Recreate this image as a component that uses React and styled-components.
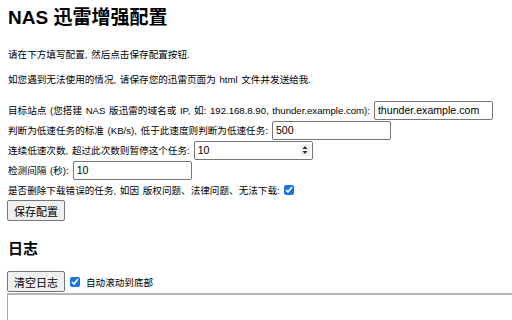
import React from "react";
import styled, { createGlobalStyle, css } from "styled-components";

const Global = createGlobalStyle`
  html, body { margin: 0; padding: 0; background: #fff; overflow: hidden; }
  body {
    font-family: "Liberation Sans", "Noto Sans CJK SC", sans-serif;
    color: #000;
  }
`;

const bodyText = css`
  font-size: 9.6px;
  word-spacing: 1px;
`;

const Page = styled.div`
  padding: 8px 0 0 8px;
`;

const Title = styled.h1`
  margin: 0;
  font-size: 19px;
  line-height: 20px;
  font-weight: 700;
`;

const Para = styled.p`
  ${bodyText};
  margin: ${(p) => p.$top}px 0 0;
  line-height: 12px;
`;

const Form = styled.div`
  margin-top: 14px;
  display: flex;
  flex-direction: column;
`;

const Row = styled.label`
  ${bodyText};
  display: flex;
  align-items: center;
  height: 20px;
  white-space: nowrap;
`;

const TextInput = styled.input`
  box-sizing: border-box;
  width: 119px;
  height: 19px;
  margin-left: 4px;
  padding: 1px 3px;
  border: 1px solid #767676;
  border-radius: 2px;
  font-family: "Liberation Sans", sans-serif;
  font-size: 10.6px;
  word-spacing: normal;
  color: #000;
  background: #fff;
  outline: none;
`;

const NumberWrap = styled.span`
  position: relative;
  display: inline-flex;
`;

const Spinner = styled.span`
  position: absolute;
  right: 3px;
  top: 3px;
  width: 9px;
  height: 12px;
  background: #f0f0f0;
  display: flex;
  flex-direction: column;
  align-items: center;
  justify-content: center;
`;

const Check = styled.input`
  width: 10px;
  height: 10px;
  margin: 0 0 0 ${(p) => p.$gap}px;
  accent-color: #1a73e8;
`;

const Button = styled.button`
  box-sizing: border-box;
  height: 21px;
  padding: 0 6px;
  border: 1px solid #767676;
  border-radius: 2px;
  background: #efefef;
  font-family: "Liberation Sans", "Noto Sans CJK SC", sans-serif;
  font-size: 11px;
  color: #000;
  align-self: flex-start;
`;

const SaveButton = styled(Button)`
  margin-left: -1px;
`;

const Heading = styled.h2`
  margin: 19px 0 0;
  font-size: 15px;
  line-height: 18px;
  font-weight: 700;
`;

const Toolbar = styled.div`
  margin-top: 13px;
  display: flex;
  align-items: center;
  margin-left: -1px;
`;

const ToolLabel = styled.label`
  ${bodyText};
  display: flex;
  align-items: center;
  gap: 6px;
`;

const Log = styled.textarea`
  display: block;
  box-sizing: border-box;
  margin: 1px 0 0 -1px;
  width: 640px;
  height: 120px;
  border: 1px solid #a9a9a9;
  border-top: 2px solid #b5b5b5;
  resize: none;
`;

function Arrows() {
  return (
    <svg width="6" height="10" viewBox="0 0 6 10">
      <path d="M3 1 L5.5 4 L0.5 4 Z" fill="#333" />
      <path d="M3 9 L5.5 6 L0.5 6 Z" fill="#333" />
    </svg>
  );
}

export default function App() {
  return (
    <>
      <Global />
      <Page>
        <Title>NAS 迅雷增强配置</Title>
        <Para $top={21}>请在下方填写配置, 然后点击保存配置按钮.</Para>
        <Para $top={13}>如您遇到无法使用的情况, 请保存您的迅雷页面为 html 文件并发送给我.</Para>
        <Form>
          <Row>
            目标站点 (您搭建 NAS 版迅雷的域名或 IP, 如: 192.168.8.90, thunder.example.com):
            <TextInput defaultValue="thunder.example.com" />
          </Row>
          <Row>
            判断为低速任务的标准 (KB/s), 低于此速度则判断为低速任务:
            <TextInput defaultValue="500" />
          </Row>
          <Row>
            连续低速次数, 超过此次数则暂停这个任务:
            <NumberWrap>
              <TextInput defaultValue="10" />
              <Spinner>
                <Arrows />
              </Spinner>
            </NumberWrap>
          </Row>
          <Row>
            检测间隔 (秒):
            <TextInput defaultValue="10" />
          </Row>
          <Row>
            是否删除下载错误的任务, 如因 版权问题、法律问题、无法下载:
            <Check type="checkbox" defaultChecked $gap={4} />
          </Row>
          <SaveButton>保存配置</SaveButton>
        </Form>
        <Heading>日志</Heading>
        <Toolbar>
          <Button>清空日志</Button>
          <ToolLabel>
            <Check type="checkbox" defaultChecked $gap={5} />
            自动滚动到底部
          </ToolLabel>
        </Toolbar>
        <Log />
      </Page>
    </>
  );
}
